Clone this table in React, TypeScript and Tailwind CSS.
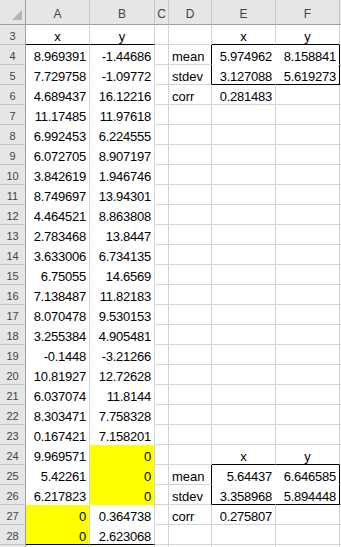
import React from "react";

type BK = "g" | "n" | "k" | "h" | "d";

const RB: Record<BK, string> = {
  g: "border-r-[#d4d4d4]",
  n: "border-r-transparent",
  k: "border-r-black",
  h: "border-r-[#c6c6c6]",
  d: "border-r-[#9f9f9f]",
};
const BB: Record<BK, string> = {
  g: "border-b-[#d4d4d4]",
  n: "border-b-transparent",
  k: "border-b-black",
  h: "border-b-[#c6c6c6]",
  d: "border-b-[#9f9f9f]",
};

interface Cell {
  t?: string;
  al?: "l" | "r" | "c";
  y?: boolean;
  r: BK;
  b: BK;
}

const AB: [string, string][] = [
  ["8.969391", "-1.44686"],
  ["7.729758", "-1.09772"],
  ["4.689437", "16.12216"],
  ["11.17485", "11.97618"],
  ["6.992453", "6.224555"],
  ["6.072705", "8.907197"],
  ["3.842619", "1.946746"],
  ["8.749697", "13.94301"],
  ["4.464521", "8.863808"],
  ["2.783468", "13.8447"],
  ["3.633006", "6.734135"],
  ["6.75055", "14.6569"],
  ["7.138487", "11.82183"],
  ["8.070478", "9.530153"],
  ["3.255384", "4.905481"],
  ["-0.1448", "-3.21266"],
  ["10.81927", "12.72628"],
  ["6.037074", "11.8144"],
  ["8.303471", "7.758328"],
  ["0.167421", "7.158201"],
  ["9.969571", "0"],
  ["5.42261", "0"],
  ["6.217823", "0"],
  ["0", "0.364738"],
  ["0", "2.623068"],
];

type Stats = { top: number; mean: [string, string]; sd: [string, string]; corr: string };
const STATS: Stats[] = [
  { top: 3, mean: ["5.974962", "8.158841"], sd: ["3.127088", "5.619273"], corr: "0.281483" },
  { top: 24, mean: ["5.64437", "6.646585"], sd: ["3.358968", "5.894448"], corr: "0.275807" },
];

function getCell(row: number, col: number): Cell {
  const c: Cell = { r: "g", b: "g" };
  if (col === 1 || col === 2) {
    if (row === 3) {
      c.t = col === 1 ? "x" : "y";
      c.al = "c";
      c.b = "k";
    } else if (row >= 4 && row <= 28) {
      c.t = AB[row - 4][col - 1];
      c.al = "r";
      c.b = row === 28 ? "k" : "n";
      if (col === 2 && row >= 24 && row <= 26) c.y = true;
      if (col === 1 && row >= 27) c.y = true;
    }
    return c;
  }
  if (col === 7) {
    c.r = "n";
    return c;
  }
  for (const s of STATS) {
    const d = row - s.top;
    if (d < 0 || d > 3) continue;
    if (col === 4) {
      if (d === 1) { c.t = "mean"; c.al = "l"; c.r = "k"; }
      if (d === 2) { c.t = "stdev"; c.al = "l"; c.r = "k"; }
      if (d === 3) { c.t = "corr"; c.al = "l"; }
    }
    if (col === 5) {
      if (d === 0) { c.t = "x"; c.al = "c"; c.b = "k"; }
      if (d === 1) { c.t = s.mean[0]; c.al = "r"; c.r = "n"; c.b = "n"; }
      if (d === 2) { c.t = s.sd[0]; c.al = "r"; c.r = "n"; c.b = "k"; }
      if (d === 3) { c.t = s.corr; c.al = "r"; }
    }
    if (col === 6) {
      if (d === 0) { c.t = "y"; c.al = "c"; c.b = "k"; }
      if (d === 1) { c.t = s.mean[1]; c.al = "r"; c.r = "k"; c.b = "n"; }
      if (d === 2) { c.t = s.sd[1]; c.al = "r"; c.r = "k"; c.b = "k"; }
    }
  }
  return c;
}

const ALIGN = { l: "justify-start", r: "justify-end", c: "justify-center" };
const COLS = ["A", "B", "C", "D", "E", "F", ""];

export default function App() {
  const rows: number[] = [];
  for (let r = 3; r <= 29; r++) rows.push(r);

  return (
    <div className="w-[341px] h-[547px] overflow-hidden bg-white font-['Liberation_Sans',Arial,sans-serif]">
      <div className="grid grid-cols-[26px_64px_65px_14px_43px_64px_64px_1fr]">
        {/* corner */}
        <div className="h-[25px] bg-[#e6e6e6] border-r border-b border-r-[#9f9f9f] border-b-[#9f9f9f] flex items-end justify-end pr-[3px] pb-[4px]">
          <svg width="10" height="10" viewBox="0 0 10 10">
            <polygon points="10,0 10,10 0,10" fill="#b4b4b4" />
          </svg>
        </div>
        {COLS.map((l, i) => (
          <div
            key={"h" + i}
            className={`h-[25px] bg-[#e6e6e6] border-b border-b-[#9f9f9f] flex items-end justify-center pb-[3px] text-[12px] leading-[14px] text-[#444] ${
              i === 6 ? "" : "border-r border-r-[#c6c6c6]"
            }`}
          >
            {l}
          </div>
        ))}
        {rows.map((row) => (
          <React.Fragment key={row}>
            <div className="h-[20px] bg-[#e6e6e6] border-r border-b border-r-[#9f9f9f] border-b-[#c6c6c6] flex items-end justify-center pb-[2px] text-[11px] leading-[12px] text-[#444]">
              {row <= 28 ? row : ""}
            </div>
            {[1, 2, 3, 4, 5, 6, 7].map((col) => {
              const c = getCell(row, col);
              const isNum = c.t !== undefined && /^-?[0-9.]+$/.test(c.t);
              return (
                <div
                  key={col}
                  className={`h-[20px] border-r border-b ${RB[c.r]} ${BB[c.b]} ${
                    c.y ? "bg-[#ffff00]" : "bg-white"
                  } flex items-end ${ALIGN[c.al ?? "r"]} px-[3px] text-[13px] leading-[14px] text-black whitespace-nowrap overflow-hidden ${
                    isNum ? "tracking-[-0.25px]" : ""
                  }`}
                >
                  {c.t}
                </div>
              );
            })}
          </React.Fragment>
        ))}
      </div>
    </div>
  );
}
